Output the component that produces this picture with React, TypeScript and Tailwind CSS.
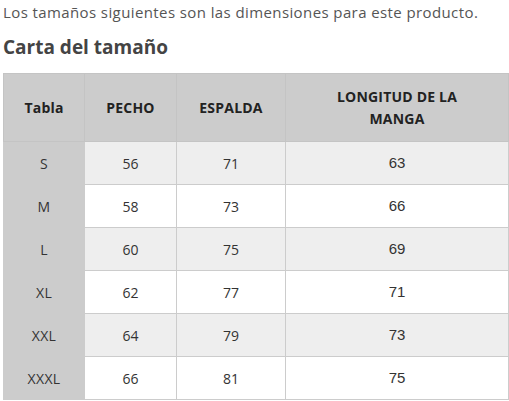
import React from "react";

const rows = [
  ["S", "56", "71", "63"],
  ["M", "58", "73", "66"],
  ["L", "60", "75", "69"],
  ["XL", "62", "77", "71"],
  ["XXL", "64", "79", "73"],
  ["XXXL", "66", "81", "75"],
];

export default function App() {
  return (
    <div className="w-[509px] h-[401px] bg-white pl-[3px] pr-px overflow-hidden font-['Open_Sans',sans-serif]">
      <p className="text-[15px] leading-[24px] text-[#555] tracking-[0.4px] whitespace-nowrap">
        Los tamaños siguientes son las dimensiones para este producto.
      </p>
      <h2 className="mt-[10px] text-[19px] leading-[26px] font-bold text-[#444]">
        Carta del tamaño
      </h2>
      <table className="mt-[13px] w-[505px] border-collapse table-fixed text-center">
        <colgroup>
          <col className="w-[81px]" />
          <col className="w-[92px]" />
          <col className="w-[109px]" />
          <col className="w-[223px]" />
        </colgroup>
        <thead>
          <tr className="h-[68px] bg-[#cccccc] text-[14px] font-bold text-[#222] leading-[22px] tracking-[0.2px]">
            <th className="border border-[#c4c4c4] font-bold">Tabla</th>
            <th className="border border-[#c4c4c4] font-bold">PECHO</th>
            <th className="border border-[#c4c4c4] font-bold">ESPALDA</th>
            <th className="border border-[#c4c4c4] font-bold px-10">LONGITUD DE LA MANGA</th>
          </tr>
        </thead>
        <tbody>
          {rows.map((r, i) => (
            <tr
              key={r[0]}
              className={`h-[43px] text-[14px] text-[#333] ${i % 2 === 0 ? "bg-[#eeeeee]" : "bg-white"}`}
            >
              <td className="border border-[#cccccc] bg-[#cccccc] tracking-[0.3px]">{r[0]}</td>
              <td className="border border-[#cccccc]">{r[1]}</td>
              <td className="border border-[#cccccc]">{r[2]}</td>
              <td className="border border-[#cccccc] font-['Liberation_Sans',sans-serif] text-[15px]">{r[3]}</td>
            </tr>
          ))}
        </tbody>
      </table>
    </div>
  );
}
